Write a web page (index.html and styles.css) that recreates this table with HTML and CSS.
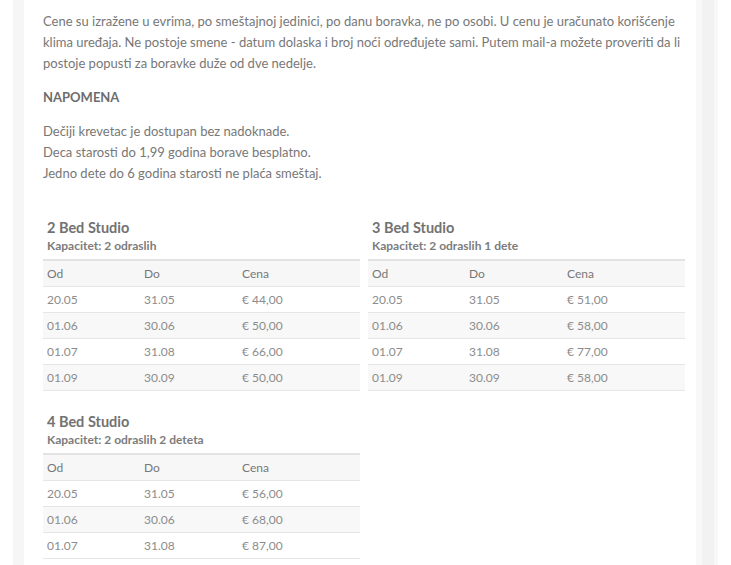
FILE: index.html
```html
<!DOCTYPE html>
<html lang="sr">
<head>
<meta charset="utf-8">
<title>Cene</title>
<link rel="stylesheet" href="styles.css">
</head>
<body>
<div class="page">
  <div class="strip strip-left"></div>
  <main class="content">
    <p class="intro">Cene su izražene u evrima, po smeštajnoj jedinici, po danu boravka, ne po osobi. U cenu je uračunato korišćenje klima uređaja. Ne postoje smene - datum dolaska i broj noći određujete sami. Putem mail-a možete proveriti da li postoje popusti za boravke duže od dve nedelje.</p>
    <p class="note-title">NAPOMENA</p>
    <p class="note">Dečiji krevetac je dostupan bez nadoknade.<br>Deca starosti do 1,99 godina borave besplatno.<br>Jedno dete do 6 godina starosti ne plaća smeštaj.</p>

    <div class="grid">
      <section class="studio">
        <h3>2 Bed Studio</h3>
        <h4>Kapacitet: 2 odraslih</h4>
        <table>
          <thead><tr><th class="c1">Od</th><th class="c2">Do</th><th>Cena</th></tr></thead>
          <tbody>
            <tr><td>20.05</td><td>31.05</td><td>€ 44,00</td></tr>
            <tr><td>01.06</td><td>30.06</td><td>€ 50,00</td></tr>
            <tr><td>01.07</td><td>31.08</td><td>€ 66,00</td></tr>
            <tr><td>01.09</td><td>30.09</td><td>€ 50,00</td></tr>
          </tbody>
        </table>
      </section>
      <section class="studio">
        <h3>3 Bed Studio</h3>
        <h4>Kapacitet: 2 odraslih 1 dete</h4>
        <table>
          <thead><tr><th class="c1">Od</th><th class="c2">Do</th><th>Cena</th></tr></thead>
          <tbody>
            <tr><td>20.05</td><td>31.05</td><td>€ 51,00</td></tr>
            <tr><td>01.06</td><td>30.06</td><td>€ 58,00</td></tr>
            <tr><td>01.07</td><td>31.08</td><td>€ 77,00</td></tr>
            <tr><td>01.09</td><td>30.09</td><td>€ 58,00</td></tr>
          </tbody>
        </table>
      </section>
      <section class="studio">
        <h3>4 Bed Studio</h3>
        <h4>Kapacitet: 2 odraslih 2 deteta</h4>
        <table>
          <thead><tr><th class="c1">Od</th><th class="c2">Do</th><th>Cena</th></tr></thead>
          <tbody>
            <tr><td>20.05</td><td>31.05</td><td>€ 56,00</td></tr>
            <tr><td>01.06</td><td>30.06</td><td>€ 68,00</td></tr>
            <tr><td>01.07</td><td>31.08</td><td>€ 87,00</td></tr>
          </tbody>
        </table>
      </section>
    </div>
  </main>
  <div class="strip strip-right"></div>
</div>
</body>
</html>
```
FILE: styles.css
```css
html, body {
  margin: 0;
  padding: 0;
  background: #ffffff;
  height: 100%;
  overflow: hidden;
}
body {
  font-family: Lato, "Open Sans", sans-serif;
  color: #777777;
}
.page {
  display: flex;
  min-height: 565px;
  padding-left: 13px;
}
.strip {
  background: #f6f6f6;
  flex: none;
}
.strip-left {
  width: 11px;
}
.strip-right {
  width: 22px;
  background: linear-gradient(to right, #f8f8f8 0, #f8f8f8 6px, #f2f2f2 6px, #f2f2f2 18px, #f8f8f8 18px);
}
.content {
  width: 643px;
  padding: 11px 10px 0 19px;
  flex: none;
}
p {
  margin: 0;
  font-size: 13px;
  line-height: 21px;
}
.intro {
  margin-bottom: 13px;
}
.note-title {
  font-weight: bold;
  color: #6d6d6d;
  margin-bottom: 13px;
}
.note {
  margin-bottom: 34px;
}
.grid {
  display: grid;
  grid-template-columns: 317px 317px;
  column-gap: 8px;
  row-gap: 21px;
  align-items: start;
}
.studio h3 {
  margin: 0;
  padding-left: 4px;
  font-size: 14.5px;
  line-height: 20px;
  font-weight: bold;
  color: #727272;
}
.studio h4 {
  margin: 0;
  padding-left: 4px;
  font-size: 12px;
  line-height: 15px;
  font-weight: bold;
  color: #7c7c7c;
  margin-bottom: 6px;
}
table {
  width: 100%;
  border-collapse: collapse;
  font-size: 12px;
  border-top: 2px solid #e3e3e3;
}
th, td {
  text-align: left;
  padding: 0 4px;
  height: 25px;
  border-bottom: 1px solid #e6e6e6;
  font-weight: normal;
}
th {
  color: #777777;
  background: #f7f7f7;
}
td {
  color: #8c8c8c;
}
.c1 { width: 89px; }
.c2 { width: 90px; }
tbody tr:nth-child(even) td {
  background: #f8f8f8;
}
```
